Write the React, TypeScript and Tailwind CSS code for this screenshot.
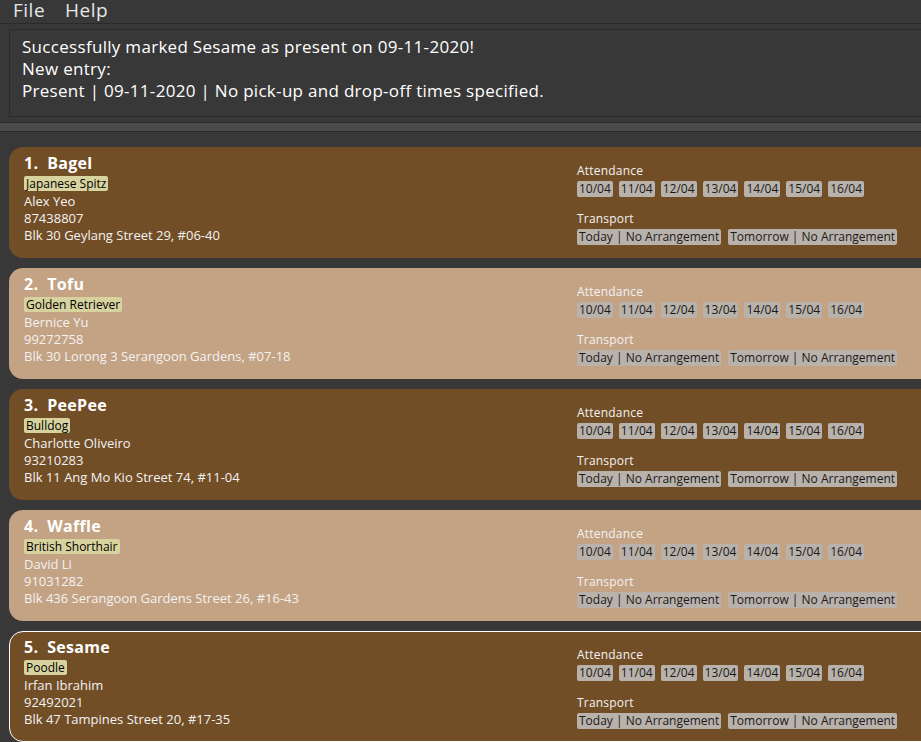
import React from "react";

const pets = [
  { n: 1, name: "Bagel", breed: "Japanese Spitz", owner: "Alex Yeo", phone: "87438807", addr: "Blk 30 Geylang Street 29, #06-40", dark: true },
  { n: 2, name: "Tofu", breed: "Golden Retriever", owner: "Bernice Yu", phone: "99272758", addr: "Blk 30 Lorong 3 Serangoon Gardens, #07-18", dark: false },
  { n: 3, name: "PeePee", breed: "Bulldog", owner: "Charlotte Oliveiro", phone: "93210283", addr: "Blk 11 Ang Mo Kio Street 74, #11-04", dark: true },
  { n: 4, name: "Waffle", breed: "British Shorthair", owner: "David Li", phone: "91031282", addr: "Blk 436 Serangoon Gardens Street 26, #16-43", dark: false },
  { n: 5, name: "Sesame", breed: "Poodle", owner: "Irfan Ibrahim", phone: "92492021", addr: "Blk 47 Tampines Street 20, #17-35", dark: true, selected: true },
];

const dates = ["10/04", "11/04", "12/04", "13/04", "14/04", "15/04", "16/04"];

function Card({ p }: { p: (typeof pets)[number] }) {
  return (
    <div
      className={`mr-[-30px] h-[111px] rounded-l-[14px] flex ${p.dark ? "bg-[#724e27]" : "bg-[#c4a384]"} ${
        p.selected ? "border border-white" : "border border-transparent"
      }`}
    >
      <div className="w-[567px] shrink-0 pl-[14px] pt-[4px] text-[#f2f2f2]">
        <div className="text-[16px] font-bold leading-[22px] text-white tracking-[0.3px]">
          {p.n}.&nbsp;&nbsp;{p.name}
        </div>
        <div className="flex mt-[2px]">
          <span className="bg-[#d8d39e] text-black text-[12px] leading-[15px] px-[2px] rounded-[2px]">{p.breed}</span>
        </div>
        <div className="text-[13px] leading-[17px] mt-[2px]">{p.owner}</div>
        <div className="text-[13px] leading-[17px]">{p.phone}</div>
        <div className="text-[13px] leading-[17px]">{p.addr}</div>
      </div>
      <div className="pt-[15px] text-[#f2f2f2]">
        <div className="text-[12px] leading-[16px] tracking-[0.2px]">Attendance</div>
        <div className="flex gap-[6px] mt-[2px]">
          {dates.map((d) => (
            <span key={d} className="bg-[#b8b2ab] text-[#1a1a1a] text-[12px] leading-[16px] px-[2px] rounded-[2px]">
              {d}
            </span>
          ))}
        </div>
        <div className="text-[12px] leading-[16px] mt-[14px] tracking-[0.2px]">Transport</div>
        <div className="flex gap-[7px] mt-[2px]">
          <span className="bg-[#b8b2ab] text-[#1a1a1a] text-[12px] leading-[16px] px-[2px] rounded-[2px]">Today | No Arrangement</span>
          <span className="bg-[#b8b2ab] text-[#1a1a1a] text-[12px] leading-[16px] px-[2px] rounded-[2px]">Tomorrow | No Arrangement</span>
        </div>
      </div>
    </div>
  );
}

export default function App() {
  return (
    <div
      className="w-[921px] h-[742px] overflow-hidden bg-[#383838] flex flex-col"
      style={{ fontFamily: '"Open Sans", "Noto Sans", sans-serif' }}
    >
      <div className="h-[24px] flex gap-[20px] pl-[13px] text-[#e6e6e6] text-[19px] leading-[20px] tracking-[0.5px] border-b border-[#2a2a2a] shrink-0">
        <span>File</span>
        <span>Help</span>
      </div>
      <div className="px-[9px] pt-[5px] pb-[5px] shrink-0">
        <div className="mr-[-30px] h-[88px] border border-[#2a2a2a] bg-[#383838] pl-[12px] pt-[6px] text-white text-[17px] leading-[22px] tracking-[0.3px]">
          <div>Successfully marked Sesame as present on 09-11-2020!</div>
          <div>New entry:</div>
          <div>Present | 09-11-2020 | No pick-up and drop-off times specified.</div>
        </div>
      </div>
      <div className="h-[10px] bg-[#4b4b4b] border-y border-[#2a2a2a] shrink-0" />
      <div className="flex flex-col gap-[10px] pl-[9px] pt-[15px]">
        {pets.map((p) => (
          <Card key={p.n} p={p} />
        ))}
      </div>
    </div>
  );
}
